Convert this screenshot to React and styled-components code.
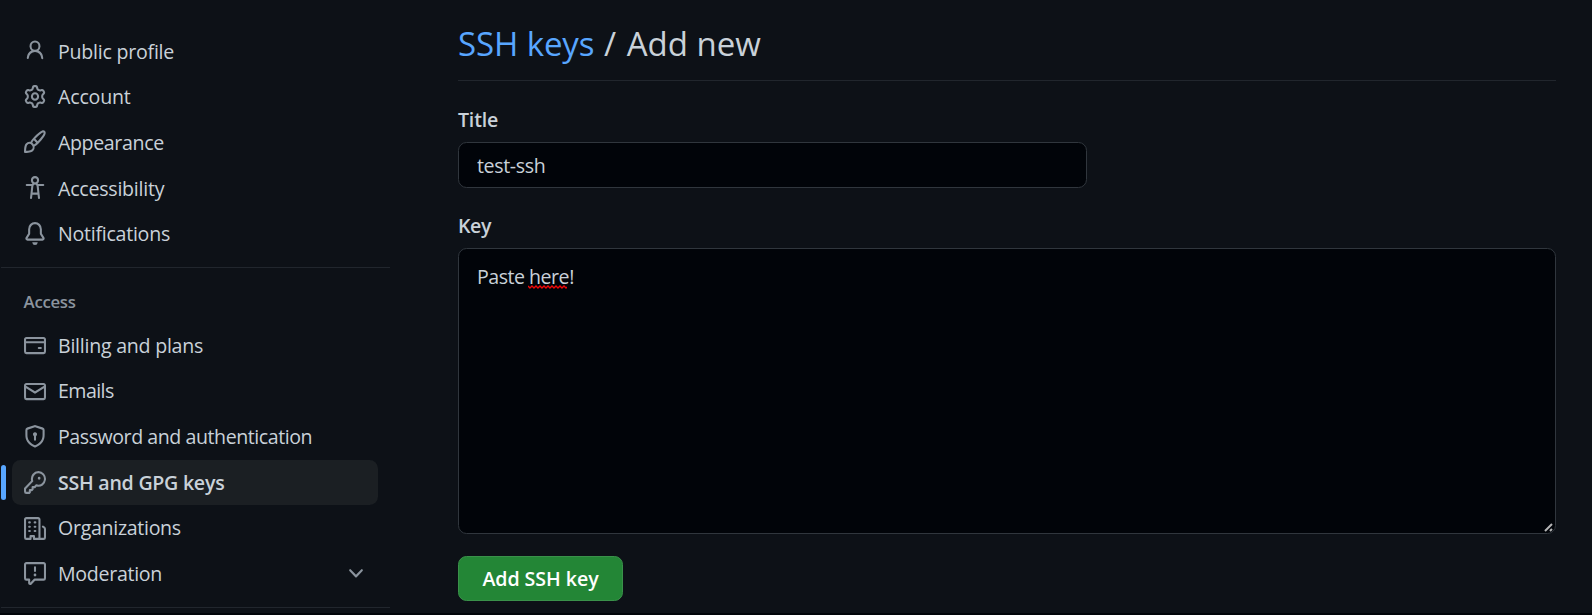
import React from "react";
import styled, { createGlobalStyle } from "styled-components";

const Global = createGlobalStyle`
  * { box-sizing: border-box; }
  html, body { margin: 0; background: #0d1117; }
  body {
    font-family: "Open Sans", "Noto Sans", sans-serif;
    font-size: 19.6px;
    color: #c9d1d9;
    overflow: hidden;
  }
`;

const Page = styled.div`
  display: flex;
  height: 615px;
  border-bottom: 2px solid #010409;
  overflow: hidden;
`;

const Sidebar = styled.nav`
  width: 390px;
  flex: none;
  padding: 29px 0 0 1px;
`;

const NavList = styled.ul`
  list-style: none;
  margin: 0;
  padding: 0 12px 0 11px;
`;

const NavItem = styled.li`
  position: relative;
  display: flex;
  align-items: center;
  height: 45.65px;
  padding: 0 11px 0 12px;
  border-radius: 8.5px;
  background: ${(p) => (p.$current ? "#1b1f23" : "transparent")};
  font-weight: ${(p) => (p.$current ? 600 : 400)};
`;

const CurrentBar = styled.span`
  position: absolute;
  left: -11px;
  top: 5px;
  width: 5px;
  height: 35px;
  border-radius: 3px;
  background: #58a6ff;
`;

const NavLabel = styled.span`
  flex: 1;
  margin-left: 12px;
  line-height: 28px;
  white-space: nowrap;
  letter-spacing: ${(p) => p.$tracking || 0}px;
`;

const Icon = styled.svg`
  width: 22px;
  height: 23px;
  margin-bottom: ${(p) => p.$lift || 0}px;
  flex: none;
  fill: #8b949e;
`;

const Divider = styled.hr`
  height: 1px;
  margin: 10px 0 0;
  border: 0;
  background: #21262d;
`;

const GroupTitle = styled.h3`
  margin: 0;
  padding: 22px 0 8px 22.6px;
  height: 54.7px;
  font-size: 16.8px;
  line-height: 24px;
  font-weight: 600;
  letter-spacing: ${(p) => p.$tracking || 0}px;
  color: #8b949e;
`;

const Main = styled.main`
  flex: 1;
  display: flex;
  flex-direction: column;
  align-items: flex-start;
  padding: 20px 36px 0 68px;
`;

const Heading = styled.h1`
  align-self: stretch;
  margin: 0;
  height: 61px;
  border-bottom: 1px solid #21262d;
  font-size: 33px;
  line-height: 48px;
  font-weight: 400;
`;

const Crumb = styled.a`
  color: #58a6ff;
  letter-spacing: -0.1px;
`;

const Slash = styled.span`
  margin: 0 2px 0 1px;
`;

const Label = styled.label`
  display: block;
  height: 36px;
  margin-top: ${(p) => p.$gap}px;
  line-height: 28px;
  font-weight: 600;
  letter-spacing: ${(p) => p.$tracking || 0}px;
`;

const TextInput = styled.input`
  width: 629px;
  height: 46px;
  padding: 0 18px;
  border: 1px solid #30363d;
  border-radius: 8.5px;
  background: #010409;
  color: #c9d1d9;
  font: inherit;
  letter-spacing: ${(p) => p.$tracking || 0}px;
  outline: none;
`;

const KeyArea = styled.div`
  position: relative;
  align-self: stretch;
  height: 286px;
  padding: 14px 18px;
  border: 1px solid #30363d;
  border-radius: 8.5px;
  background: #010409;
  line-height: 28px;
  letter-spacing: ${(p) => p.$tracking || 0}px;
`;

const Misspelled = styled.span`
  position: relative;
`;

const Squiggle = styled.svg`
  position: absolute;
  left: -1px;
  bottom: 1px;
  width: 39px;
  height: 4px;
  fill: none;
  stroke: #f00808;
  stroke-width: 1.4;
`;

const Grip = styled.svg`
  position: absolute;
  right: 2px;
  bottom: 1px;
  width: 9px;
  height: 9px;
  stroke: #b4b5b6;
  stroke-width: 2;
`;

const SubmitButton = styled.button`
  width: 165px;
  height: 45px;
  margin-top: 22px;
  padding: 0;
  border: 1px solid #3a914a;
  border-radius: 8.5px;
  background: #238636;
  color: #fff;
  font: inherit;
  font-weight: 650;
  letter-spacing: ${(p) => p.$tracking || 0}px;
`;

const paths = {
  person: "M10.561 8.073a6.005 6.005 0 0 1 3.432 5.142.75.75 0 1 1-1.498.07 4.5 4.5 0 0 0-8.99 0 .75.75 0 0 1-1.498-.07 6.004 6.004 0 0 1 3.431-5.142 3.999 3.999 0 1 1 5.123 0ZM10.5 5a2.5 2.5 0 1 0-5 0 2.5 2.5 0 0 0 5 0Z",
  gear: "M8 0a8.2 8.2 0 0 1 .701.031C9.444.095 9.99.645 10.16 1.29l.288 1.107c.018.066.079.158.212.224.231.114.454.243.668.386.123.082.233.09.299.071l1.103-.303c.644-.176 1.392.021 1.82.63.27.385.506.792.704 1.218.315.675.111 1.422-.364 1.891l-.814.806c-.049.048-.098.147-.088.294.016.257.016.515 0 .772-.01.147.038.246.088.294l.814.806c.475.469.679 1.216.364 1.891a7.977 7.977 0 0 1-.704 1.217c-.428.61-1.176.807-1.82.63l-1.102-.302c-.067-.019-.177-.011-.3.071a5.909 5.909 0 0 1-.668.386c-.133.066-.194.158-.211.224l-.29 1.106c-.168.646-.715 1.196-1.458 1.26a8.006 8.006 0 0 1-1.402 0c-.743-.064-1.289-.614-1.458-1.26l-.289-1.106c-.018-.066-.079-.158-.212-.224a5.738 5.738 0 0 1-.668-.386c-.123-.082-.233-.09-.299-.071l-1.103.303c-.644.176-1.392-.021-1.82-.63a8.12 8.12 0 0 1-.704-1.218c-.315-.675-.111-1.422.363-1.891l.815-.806c.05-.048.098-.147.088-.294a6.214 6.214 0 0 1 0-.772c.01-.147-.038-.246-.088-.294l-.815-.806C.635 6.045.431 5.298.746 4.623a7.92 7.92 0 0 1 .704-1.217c.428-.61 1.176-.807 1.82-.63l1.102.302c.067.019.177.011.3-.071.214-.143.437-.272.668-.386.133-.066.194-.158.211-.224l.29-1.106C6.009.645 6.556.095 7.299.03 7.53.01 7.764 0 8 0Zm-.571 1.525c-.036.003-.108.036-.137.146l-.289 1.105c-.147.561-.549.967-.998 1.189-.173.086-.34.183-.5.29-.417.278-.97.423-1.529.27l-1.103-.303c-.109-.03-.175.016-.195.045-.22.312-.412.644-.573.99-.014.031-.021.11.059.19l.815.806c.411.406.562.957.53 1.456a4.709 4.709 0 0 0 0 .582c.032.499-.119 1.05-.53 1.456l-.815.806c-.081.08-.073.159-.059.19.162.346.353.677.573.989.02.03.085.076.195.046l1.102-.303c.56-.153 1.113-.008 1.53.27.161.107.328.204.501.29.447.222.85.629.997 1.189l.289 1.105c.029.109.101.143.137.146a6.6 6.6 0 0 0 1.142 0c.036-.003.108-.036.137-.146l.289-1.105c.147-.561.549-.967.998-1.189.173-.086.34-.183.5-.29.417-.278.97-.423 1.529-.27l1.103.303c.109.029.175-.016.195-.045.22-.313.411-.644.573-.99.014-.031.021-.11-.059-.19l-.815-.806c-.411-.406-.562-.957-.53-1.456a4.709 4.709 0 0 0 0-.582c-.032-.499.119-1.05.53-1.456l.815-.806c.081-.08.073-.159.059-.19a6.464 6.464 0 0 0-.573-.989c-.02-.03-.085-.076-.195-.046l-1.102.303c-.56.153-1.113.008-1.53-.27a4.44 4.44 0 0 0-.501-.29c-.447-.222-.85-.629-.997-1.189l-.289-1.105c-.029-.11-.101-.143-.137-.146a6.6 6.6 0 0 0-1.142 0ZM11 8a3 3 0 1 1-6 0 3 3 0 0 1 6 0ZM9.5 8a1.5 1.5 0 1 0-3.001.001A1.5 1.5 0 0 0 9.5 8Z",
  brush: "M11.134 1.535c.7-.509 1.416-.942 2.076-1.155.649-.21 1.463-.267 2.069.34.603.601.568 1.411.368 2.07-.202.668-.624 1.39-1.125 2.096-1.011 1.424-2.496 2.987-3.775 4.249-1.098 1.084-2.132 1.839-3.04 2.3a3.744 3.744 0 0 1-1.055 3.217c-.431.431-1.065.691-1.657.861-.614.177-1.294.287-1.914.357A21.151 21.151 0 0 1 .797 16H.743a.75.75 0 0 1-.743-.742v-.054a21.25 21.25 0 0 1 .13-2.284c.067-.647.187-1.287.358-1.914.17-.591.43-1.226.86-1.657a3.746 3.746 0 0 1 3.227-1.054c.466-.893 1.225-1.907 2.314-2.982 1.271-1.255 2.833-2.75 4.245-3.778ZM1.62 13.089c-.051.464-.086.929-.104 1.395.466-.018.932-.053 1.396-.104a10.511 10.511 0 0 0 1.668-.309c.526-.151.856-.325 1.011-.48a2.25 2.25 0 1 0-3.182-3.182c-.155.155-.329.485-.48 1.01a10.515 10.515 0 0 0-.309 1.67Zm10.396-10.34c-1.224.89-2.605 2.189-3.822 3.384l1.718 1.718c1.21-1.205 2.51-2.597 3.387-3.833.47-.662.78-1.227.912-1.662.134-.444.032-.551.009-.575h-.001V1.78c-.014-.014-.113-.113-.548.027-.432.14-.995.462-1.655.942Zm-4.832 7.266-.001.001a9.859 9.859 0 0 0 1.63-1.142L7.155 7.216a9.7 9.7 0 0 0-1.161 1.607c.482.302.889.71 1.19 1.192Z",
  accessibility: "M9.923 5.302c.063.063.122.129.178.198H14A.75.75 0 0 1 14 7h-3.3l.578 5.163.362 2.997a.75.75 0 0 1-1.49.18L9.868 13H6.132l-.282 2.34a.75.75 0 0 1-1.49-.18l.362-2.997L5.3 7H2a.75.75 0 0 1 0-1.5h3.9a2.54 2.54 0 0 1 .176-.198 3 3 0 1 1 3.847 0ZM9.2 7.073h-.001a1.206 1.206 0 0 0-2.398 0L6.305 11.5h3.39ZM9.5 3a1.5 1.5 0 1 0-3.001.001A1.5 1.5 0 0 0 9.5 3Z",
  bell: "M8 16a2 2 0 0 0 1.985-1.75c.017-.137-.097-.25-.235-.25h-3.5c-.138 0-.252.113-.235.25A2 2 0 0 0 8 16ZM3 5a5 5 0 0 1 10 0v2.947c0 .05.015.098.042.139l1.703 2.555A1.519 1.519 0 0 1 13.482 13H2.518a1.516 1.516 0 0 1-1.263-2.36l1.703-2.554A.255.255 0 0 0 3 7.947Zm5-3.5A3.5 3.5 0 0 0 4.5 5v2.947c0 .346-.102.683-.294.97l-1.703 2.556a.017.017 0 0 0-.003.01l.001.006c0 .002.002.004.004.006l.006.004.007.001h10.964l.007-.001.006-.004.004-.006.001-.007a.017.017 0 0 0-.003-.01l-1.703-2.554a1.745 1.745 0 0 1-.294-.97V5A3.5 3.5 0 0 0 8 1.5Z",
  card: "M10.75 9a.75.75 0 0 0 0 1.5h1.5a.75.75 0 0 0 0-1.5h-1.5ZM0 3.75C0 2.784.784 2 1.75 2h12.5c.966 0 1.75.784 1.75 1.75v8.5A1.75 1.75 0 0 1 14.25 14H1.75A1.75 1.75 0 0 1 0 12.25ZM14.5 6.5h-13v5.75c0 .138.112.25.25.25h12.5a.25.25 0 0 0 .25-.25Zm0-2.75a.25.25 0 0 0-.25-.25H1.75a.25.25 0 0 0-.25.25V5h13Z",
  mail: "M1.75 2h12.5c.966 0 1.75.784 1.75 1.75v8.5A1.75 1.75 0 0 1 14.25 14H1.75A1.75 1.75 0 0 1 0 12.25v-8.5C0 2.784.784 2 1.75 2ZM1.5 12.251c0 .138.112.25.25.25h12.5a.25.25 0 0 0 .25-.25V5.809L8.38 9.397a.75.75 0 0 1-.76 0L1.5 5.809v6.442Zm13-8.181v-.32a.25.25 0 0 0-.25-.25H1.75a.25.25 0 0 0-.25.25v.32L8 7.88Z",
  shield: "m8.533.133 5.25 1.68A1.75 1.75 0 0 1 15 3.48V7c0 1.566-.32 3.182-1.303 4.682-.983 1.498-2.585 2.813-5.032 3.855a1.697 1.697 0 0 1-1.33 0c-2.447-1.042-4.049-2.357-5.032-3.855C1.32 10.182 1 8.566 1 7V3.48a1.755 1.755 0 0 1 1.217-1.667l5.25-1.68a1.748 1.748 0 0 1 1.066 0Zm-.61 1.429.001.001-5.25 1.68a.251.251 0 0 0-.174.237V7c0 1.36.275 2.666 1.057 3.859.784 1.194 2.121 2.342 4.366 3.298a.196.196 0 0 0 .154 0c2.245-.957 3.582-2.103 4.366-3.297C13.225 9.666 13.5 8.358 13.5 7V3.48a.25.25 0 0 0-.174-.238l-5.25-1.68a.25.25 0 0 0-.153 0ZM9.5 6.5c0 .536-.286 1.032-.75 1.3v2.45a.75.75 0 0 1-1.5 0V7.8A1.5 1.5 0 1 1 9.5 6.5Z",
  key: "M10.5 0a5.499 5.499 0 1 1-1.288 10.848l-.932.932a.749.749 0 0 1-.53.22H7v.75a.749.749 0 0 1-.22.53l-.5.5a.749.749 0 0 1-.53.22H5v.75a.749.749 0 0 1-.22.53l-.5.5a.749.749 0 0 1-.53.22h-2A1.75 1.75 0 0 1 0 14.25v-2c0-.199.079-.389.22-.53l4.932-4.932A5.5 5.5 0 0 1 10.5 0Zm-4 5.5c-.001.431.069.86.205 1.269a.75.75 0 0 1-.181.768L1.5 12.56v1.69c0 .138.112.25.25.25h1.69l.06-.06v-1.19a.75.75 0 0 1 .75-.75h1.19l.06-.06v-1.19a.75.75 0 0 1 .75-.75h1.19l1.023-1.025a.75.75 0 0 1 .768-.18A4 4 0 1 0 6.5 5.5ZM11 6a1 1 0 1 1 0-2 1 1 0 0 1 0 2Z",
  organization: "M1.75 16A1.75 1.75 0 0 1 0 14.25V1.75C0 .784.784 0 1.75 0h8.5C11.216 0 12 .784 12 1.75v12.5c0 .085-.006.168-.018.25h2.268a.25.25 0 0 0 .25-.25V8.285a.25.25 0 0 0-.111-.208l-1.055-.703a.749.749 0 1 1 .832-1.248l1.055.703c.487.325.779.871.779 1.456v5.965A1.75 1.75 0 0 1 14.25 16h-3.5a.766.766 0 0 1-.197-.026c-.099.017-.2.026-.303.026h-3a.75.75 0 0 1-.75-.75V14h-1v1.25a.75.75 0 0 1-.75.75Zm-.25-1.75c0 .138.112.25.25.25H4v-1.25a.75.75 0 0 1 .75-.75h2.5a.75.75 0 0 1 .75.75v1.25h2.25a.25.25 0 0 0 .25-.25V1.75a.25.25 0 0 0-.25-.25h-8.5a.25.25 0 0 0-.25.25ZM3.75 6h.5a.75.75 0 0 1 0 1.5h-.5a.75.75 0 0 1 0-1.5ZM3 3.75A.75.75 0 0 1 3.75 3h.5a.75.75 0 0 1 0 1.5h-.5A.75.75 0 0 1 3 3.75Zm4 3A.75.75 0 0 1 7.75 6h.5a.75.75 0 0 1 0 1.5h-.5A.75.75 0 0 1 7 6.75ZM7.75 3h.5a.75.75 0 0 1 0 1.5h-.5a.75.75 0 0 1 0-1.5ZM3 9.75A.75.75 0 0 1 3.75 9h.5a.75.75 0 0 1 0 1.5h-.5A.75.75 0 0 1 3 9.75ZM7.75 9h.5a.75.75 0 0 1 0 1.5h-.5a.75.75 0 0 1 0-1.5Z",
  report: "M0 1.75C0 .784.784 0 1.75 0h12.5C15.216 0 16 .784 16 1.75v9.5A1.75 1.75 0 0 1 14.25 13H8.06l-2.573 2.573A1.458 1.458 0 0 1 3 14.543V13H1.75A1.75 1.75 0 0 1 0 11.25Zm1.75-.25a.25.25 0 0 0-.25.25v9.5c0 .138.112.25.25.25h2a.75.75 0 0 1 .75.75v2.19l2.72-2.72a.749.749 0 0 1 .53-.22h6.5a.25.25 0 0 0 .25-.25v-9.5a.25.25 0 0 0-.25-.25Zm7 2.25v2.5a.75.75 0 0 1-1.5 0v-2.5a.75.75 0 0 1 1.5 0ZM9 9a1 1 0 1 1-2 0 1 1 0 0 1 2 0Z",
  chevron: "M12.78 5.22a.749.749 0 0 1 0 1.06l-4.25 4.25a.749.749 0 0 1-1.06 0L3.22 6.28a.749.749 0 1 1 1.06-1.06L8 8.939l3.72-3.719a.749.749 0 0 1 1.06 0Z",
};

const account = [
  { icon: "person", label: "Public profile", tracking: -0.24 },
  { icon: "gear", label: "Account", tracking: -0.19 },
  { icon: "brush", label: "Appearance", tracking: -0.38 },
  { icon: "accessibility", label: "Accessibility", tracking: -0.24 },
  { icon: "bell", label: "Notifications", tracking: -0.26 },
];

const access = [
  { icon: "card", label: "Billing and plans", tracking: -0.25 },
  { icon: "mail", label: "Emails", tracking: -0.56 },
  { icon: "shield", label: "Password and authentication", tracking: -0.45 },
  { icon: "key", label: "SSH and GPG keys", tracking: -0.26, current: true },
  { icon: "organization", label: "Organizations", tracking: -0.31 },
  { icon: "report", label: "Moderation", tracking: -0.3, expandable: true },
];

const Glyph = ({ name, lift }) => (
  <Icon viewBox="0 0 16 16" preserveAspectRatio="none" $lift={lift} aria-hidden="true">
    <path d={paths[name]} />
  </Icon>
);

const Nav = ({ items, lift }) => (
  <NavList>
    {items.map((item) => (
      <NavItem key={item.label} $current={item.current}>
        {item.current && <CurrentBar />}
        <Glyph name={item.icon} lift={lift} />
        <NavLabel $tracking={item.tracking}>{item.label}</NavLabel>
        {item.expandable && <Glyph name="chevron" />}
      </NavItem>
    ))}
  </NavList>
);

export default function App() {
  return (
    <>
      <Global />
      <Page>
        <Sidebar>
          <Nav items={account} lift={2.3} />
          <Divider />
          <GroupTitle $tracking={-0.3}>Access</GroupTitle>
          <Nav items={access} />
          <Divider />
        </Sidebar>
        <Main>
          <Heading>
            <Crumb>SSH keys</Crumb> <Slash>/</Slash> Add new
          </Heading>
          <Label $gap={25} $tracking={-0.2} htmlFor="title">Title</Label>
          <TextInput id="title" $tracking={-0.36} defaultValue="test-ssh" />
          <Label $gap={24} $tracking={-0.4}>Key</Label>
          <KeyArea $tracking={-0.5}>
            Paste{" "}
            <Misspelled>
              here
              <Squiggle viewBox="0 0 39 4">
                <path d="M0 1l2 2 2-2 2 2 2-2 2 2 2-2 2 2 2-2 2 2 2-2 2 2 2-2 2 2 2-2 2 2 2-2 2 2 2-2 2 2 1-1" />
              </Squiggle>
            </Misspelled>
            !
            <Grip viewBox="0 0 9 9">
              <path d="M1 8L8 1M6 8l2-2" />
            </Grip>
          </KeyArea>
          <SubmitButton $tracking={-0.05}>Add SSH key</SubmitButton>
        </Main>
      </Page>
    </>
  );
}
